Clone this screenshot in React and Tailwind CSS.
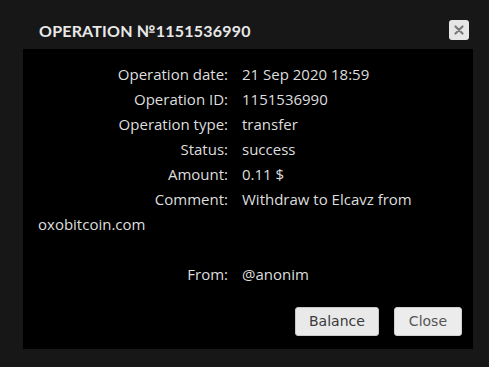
export default function App() {
  const rows = [
    ["Operation date:", "21 Sep 2020 18:59"],
    ["Operation ID:", "1151536990"],
    ["Operation type:", "transfer"],
    ["Status:", "success"],
    ["Amount:", "0.11 $"],
    ["Comment:", "Withdraw to Elcavz from oxobitcoin.com"],
  ];
  return (
    <div className="w-[489px] h-[367px] bg-[#171717] pt-[20px] relative">
      <div className="flex items-start justify-between pl-[39px] pr-[20px] h-[29px]">
        <div className="text-[16px] font-bold text-[#e8e8e8] tracking-[0.2px] leading-[20px] mt-[1px]" style={{ fontFamily: "Lato, 'Noto Sans', sans-serif" }}>
          OPERATION №1151536990
        </div>
        <button className="w-[20px] h-[20px] rounded-[3px] bg-[#e6e6e6] flex items-center justify-center">
          <svg width="10" height="10" viewBox="0 0 10 10">
            <path d="M1.5 1.5 L8.5 8.5 M8.5 1.5 L1.5 8.5" stroke="#7a7a7a" strokeWidth="2.2" strokeLinecap="round" />
          </svg>
        </button>
      </div>
      <div className="ml-[23px] w-[450px] h-[300px] bg-black pt-[13px] px-[15px]" style={{ fontFamily: "'Open Sans', sans-serif" }}>
        <div className="text-[15px] leading-[25px] text-[#dedede]">
          {rows.map(([l, v]) => (
            <div key={l}>
              <span className="inline-block w-[190px] text-right mr-[14px]">{l}</span>
              {v}
            </div>
          ))}
          <div className="h-[25px]"></div>
          <div>
            <span className="inline-block w-[190px] text-right mr-[14px]">From:</span>
            @anonim
          </div>
        </div>
        <div className="flex justify-end gap-[15px] mt-[20px] mr-[-4px]" style={{ fontFamily: "'DejaVu Sans', sans-serif" }}>
          <button className="h-[29px] px-[13px] rounded-[3px] bg-[#e9e9e9] border border-[#c8c8c8] text-[14px] text-[#3a3a3a]">Balance</button>
          <button className="h-[29px] px-[14px] rounded-[3px] bg-[#ececec] border border-[#d0d0d0] text-[14px] text-[#555]">Close</button>
        </div>
      </div>
    </div>
  );
}
